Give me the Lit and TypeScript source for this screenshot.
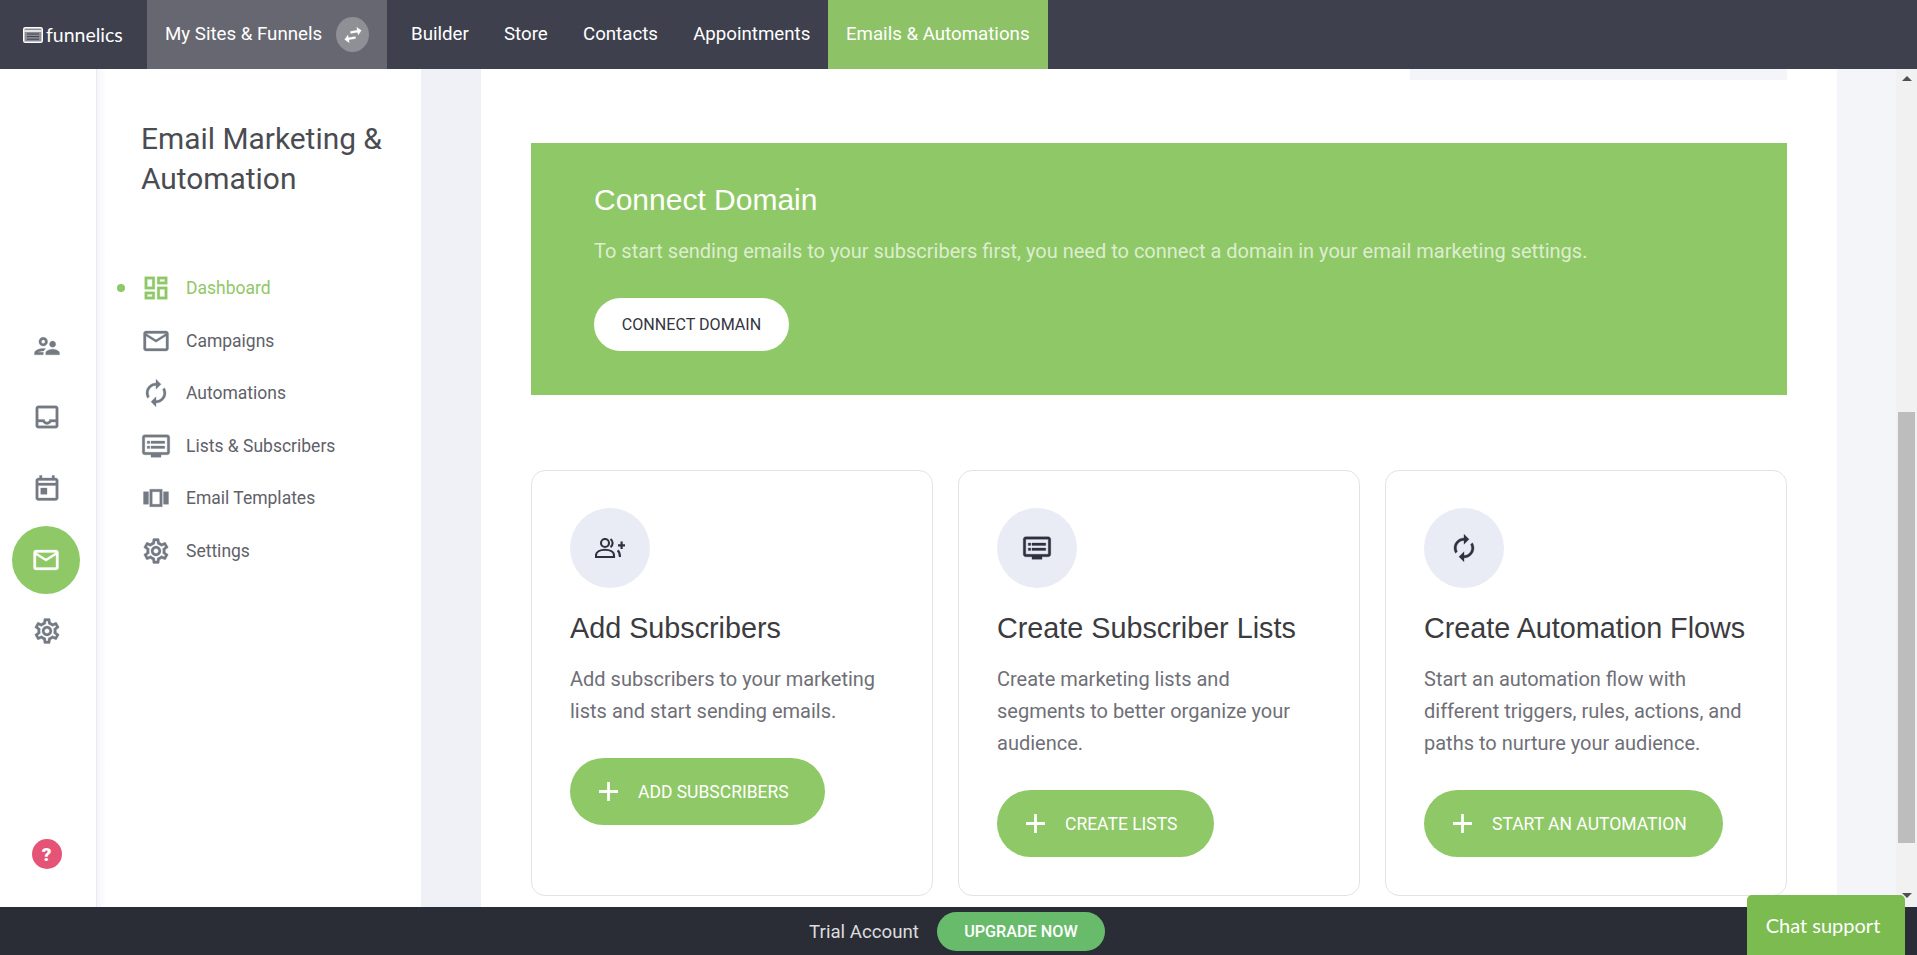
import { LitElement, html, css } from "lit";
import { customElement } from "lit/decorators.js";

const P = {
  people: "M9 12c1.93 0 3.5-1.57 3.5-3.5S10.93 5 9 5 5.5 6.57 5.5 8.5 7.07 12 9 12zm0-5c.83 0 1.5.67 1.5 1.5S9.83 10 9 10s-1.5-.67-1.5-1.5S8.17 7 9 7zm.05 10H4.77c.99-.5 2.7-1 4.23-1 .11 0 .23.01.34.01.34-.73.93-1.33 1.64-1.81-.73-.13-1.42-.2-1.98-.2-2.34 0-7 1.17-7 3.5V19h7v-1.5c0-.17.02-.34.05-.5zm7.45-2.5c-1.84 0-5.5 1.01-5.5 3V19h11v-1.5c0-1.99-3.66-3-5.5-3zm1.21-1.82c.76-.43 1.29-1.24 1.29-2.18C19 9.12 17.88 8 16.5 8S14 9.12 14 10.5c0 .94.53 1.75 1.29 2.18.36.2.77.32 1.21.32s.85-.12 1.21-.32z",
  inbox: "M19 3H5c-1.1 0-2 .9-2 2v14c0 1.1.9 2 2 2h14c1.1 0 2-.9 2-2V5c0-1.1-.9-2-2-2zm0 16H5v-3h3.56c.69 1.19 1.97 2 3.44 2s2.75-.81 3.44-2H19v3zm0-5h-4.99c0 1.1-.9 2-2 2s-2-.9-2-2H5V5h14v9z",
  today: "M19 4h-1V2h-2v2H8V2H6v2H5c-1.11 0-1.99.9-1.99 2L3 20c0 1.1.89 2 2 2h14c1.1 0 2-.9 2-2V6c0-1.1-.9-2-2-2zm0 16H5V10h14v10zm0-12H5V6h14v2zM7 12h5v5H7z",
  mail: "M20 4H4c-1.1 0-1.99.9-1.99 2L2 18c0 1.1.9 2 2 2h16c1.1 0 2-.9 2-2V6c0-1.1-.9-2-2-2zm0 14H4V8l8 5 8-5v10zm-8-7L4 6h16l-8 5z",
  gear: "M19.43 12.98c.04-.32.07-.64.07-.98 0-.34-.03-.66-.07-.98l2.11-1.65c.19-.15.24-.42.12-.64l-2-3.46c-.09-.16-.26-.25-.44-.25-.06 0-.12.01-.17.03l-2.49 1c-.52-.4-1.08-.73-1.69-.98l-.38-2.65C14.46 2.18 14.25 2 14 2h-4c-.25 0-.46.18-.49.42l-.38 2.65c-.61.25-1.17.59-1.69.98l-2.49-1c-.06-.02-.12-.03-.18-.03-.17 0-.34.09-.43.25l-2 3.46c-.13.22-.07.49.12.64l2.11 1.65c-.04.32-.07.65-.07.98 0 .33.03.66.07.98l-2.11 1.65c-.19.15-.24.42-.12.64l2 3.46c.09.16.26.25.44.25.06 0 .12-.01.17-.03l2.49-1c.52.4 1.08.73 1.69.98l.38 2.65c.03.24.24.42.49.42h4c.25 0 .46-.18.49-.42l.38-2.65c.61-.25 1.17-.59 1.69-.98l2.49 1c.06.02.12.03.18.03.17 0 .34-.09.43-.25l2-3.46c.12-.22.07-.49-.12-.64l-2.11-1.65zm-1.98-1.71c.04.31.05.52.05.73 0 .21-.02.43-.05.73l-.14 1.13.89.7 1.08.84-.7 1.21-1.27-.51-1.04-.42-.9.68c-.43.32-.84.56-1.25.73l-1.06.43-.16 1.13-.2 1.35h-1.4l-.19-1.35-.16-1.13-1.06-.43c-.43-.18-.83-.41-1.23-.71l-.91-.7-1.06.43-1.27.51-.7-1.21 1.08-.84.89-.7-.14-1.13c-.03-.31-.05-.54-.05-.74s.02-.43.05-.73l.14-1.13-.89-.7-1.08-.84.7-1.21 1.27.51 1.04.42.9-.68c.43-.32.84-.56 1.25-.73l1.06-.43.16-1.13.2-1.35h1.39l.19 1.35.16 1.13 1.06.43c.43.18.83.41 1.23.71l.91.7 1.06-.43 1.27-.51.7 1.21-1.07.85-.89.7.14 1.13zM12 8c-2.21 0-4 1.79-4 4s1.79 4 4 4 4-1.79 4-4-1.79-4-4-4zm0 6c-1.1 0-2-.9-2-2s.9-2 2-2 2 .9 2 2-.9 2-2 2z",
  dash: "M19 5v2h-4V5h4M9 5v6H5V5h4m10 8v6h-4v-6h4M9 17v2H5v-2h4M21 3h-8v6h8V3zM11 3H3v10h8V3zm10 8h-8v10h8V11zm-10 4H3v6h8v-6z",
  renew: "M12 6v3l4-4-4-4v3c-4.42 0-8 3.58-8 8 0 1.57.46 3.03 1.24 4.26L6.7 14.8c-.45-.83-.7-1.79-.7-2.8 0-3.31 2.69-6 6-6zm6.76 1.74L17.3 9.2c.44.84.7 1.79.7 2.8 0 3.31-2.69 6-6 6v-3l-4 4 4 4v-3c4.42 0 8-3.58 8-8 0-1.57-.46-3.03-1.24-4.26z",
  dvr: "M21 3H3c-1.1 0-2 .9-2 2v12c0 1.1.9 2 2 2h5v2h8v-2h5c1.1 0 1.99-.9 1.99-2L23 5c0-1.1-.9-2-2-2zm0 14H3V5h18v12zm-2-9H8v2h11V8zm0 4H8v2h11v-2zM7 8H5v2h2V8zm0 4H5v2h2v-2z",
  carousel: "M2 7h4v10H2V7zm5 12h10V5H7v14zM9 7h6v10H9V7zm9 0h4v10h-4V7z",
  swap: "M6.99 11L3 15l3.99 4v-3H14v-2H6.99v-3zM21 9l-3.99-4v3H10v2h7.01v3L21 9z",
};

const icon = (d: string, size = 30) => html`<svg class="ic" width=${size} height=${size} viewBox="0 0 24 24" fill="currentColor"><path d=${d}></path></svg>`;

const plus = html`<svg class="plus" width="19" height="19" viewBox="0 0 19 19"><path d="M9.5 0v19M0 9.5h19" stroke="#fff" stroke-width="2.8" fill="none"></path></svg>`;

const addUser = html`<svg width="30" height="20" viewBox="0 0 30 20" fill="none" stroke="#2f3140" stroke-width="2.1">
  <circle cx="10" cy="5" r="4"></circle>
  <path d="M1 19v-1.6C1 13.6 5.5 11.8 10 11.8s9 1.8 9 5.6V19z"></path>
  <path d="M15.5 1a5 5 0 0 1 0 8.2M22.6 12.4c1.7 1.3 2.4 3.6 2.4 6.6"></path>
  <path d="M26.6 3.6v7.4M23 7.3h7.2" stroke-width="2.2"></path>
</svg>`;

const logoMark = html`<svg width="20" height="16" viewBox="0 0 20 16">
  <rect x="0.75" y="0.75" width="18.5" height="14.5" rx="1.6" fill="#8b8c94" stroke="#fff" stroke-width="1.5"></rect>
  <path d="M1.5 4h17" stroke="#fff" stroke-width="1.5"></path>
  <path d="M4 7h12M4 9.6h12M4 12.2h12" stroke="#3e404d" stroke-width="1"></path>
</svg>`;

const NAV = [
  ["Dashboard", P.dash, true], ["Campaigns", P.mail, false], ["Automations", P.renew, false],
  ["Lists & Subscribers", P.dvr, false], ["Email Templates", P.carousel, false], ["Settings", P.gear, false],
] as const;

const CARDS = [
  { icon: addUser, title: "Add Subscribers", text: "Add subscribers to your marketing lists and start sending emails.", cta: "ADD SUBSCRIBERS" },
  { icon: icon(P.dvr, 30), title: "Create Subscriber Lists", text: "Create marketing lists and segments to better organize your audience.", cta: "CREATE LISTS" },
  { icon: icon(P.renew, 30), title: "Create Automation Flows", text: "Start an automation flow with different triggers, rules, actions, and paths to nurture your audience.", cta: "START AN AUTOMATION" },
];

@customElement("app-root")
export class AppRoot extends LitElement {
  static styles = css`
    :host { display: block; height: 955px; overflow: hidden; position: relative; font-family: Roboto, "Liberation Sans", sans-serif; }
    * { box-sizing: border-box; }
    .ic path { stroke: currentColor; stroke-width: .25; }
    .page { height: 955px; display: flex; flex-direction: column; }
    .top { height: 69px; flex: none; background: #3e404d; display: flex; align-items: stretch; color: #fff; font-size: 18.7px; }
    .logo { width: 147px; display: flex; align-items: center; padding-left: 23px; gap: 3px; font-family: Lato, sans-serif; font-size: 19.5px; }
    .tab { display: flex; align-items: center; padding: 0 18px 2px; white-space: nowrap; }
    .tab.sites { background: #676771; width: 240px; gap: 14px; }
    .tab.act { background: #8dc267; }
    .swap { width: 34px; height: 35px; border-radius: 50%; background: #8f8f96; display: flex; align-items: center; justify-content: center; margin-top: 2px; }
    .swap .ic { transform: rotate(-10deg); }
    .tab.plain { padding: 0 17.6px 2px; }
    .tab.first { padding-left: 24px; }
    .mid { flex: 1; display: flex; min-height: 0; }
    .rail { width: 97px; flex: none; border-right: 1.5px solid #e9eaf0; display: flex; flex-direction: column; align-items: center; color: #747a84; padding: 241.5px 3px 0 0; }
    .rail-i { height: 71px; width: 68px; flex: none; display: flex; align-items: center; justify-content: center; }
    .rail-i.on { margin-top: 1px; }
    .rail-i b { width: 68px; height: 68px; flex: none; margin-left: -2px; border-radius: 50%; background: #8fc866; color: #fff; display: flex; align-items: center; justify-content: center; }
    .help { margin-top: auto; margin-bottom: 38px; width: 30px; height: 30px; border-radius: 50%; background: #e55477; color: #fff; font-weight: 900; font-size: 19px; display: flex; align-items: center; justify-content: center; }
    .nav { width: 324px; flex: none; background: linear-gradient(90deg, #f6f6fa 0, #fff 10px); padding-top: 50px; }
    .nav h1 { margin: 0 0 63px 44px; font-size: 29.9px; font-weight: 400; line-height: 40px; color: #4a4c52; }
    .item { height: 52.55px; display: flex; align-items: center; position: relative; padding-left: 44px; font-size: 17.5px; color: #5f6169; }
    .item .ic { color: #747a84; flex: none; }
    .item span { margin-left: 15px; }
    .item.on, .item.on .ic { color: #8fc866; }
    .item.on::before { content: ""; position: absolute; left: 20px; top: 22px; width: 8px; height: 8px; border-radius: 50%; background: #8fc866; }
    .main { flex: 1; display: flex; background: linear-gradient(90deg, #f0f1f6, #f3f4f8); min-width: 0; }
    .panel { margin-left: 60px; width: 1356px; flex: none; height: 100%; background: #fff; padding: 0 50px; overflow: hidden; }
    .strip { height: 11px; width: 377px; margin-left: auto; background: #f4f5f9; }
    .banner { margin-top: 63px; height: 252px; background: #8fc866; padding: 42px 63px 0; }
    .banner h2 { margin: 0; font: 400 30px/30px "Liberation Sans", Arial, sans-serif; color: #fff; }
    .banner p { margin: 21px 0 0; font-size: 20px; line-height: 30px; color: rgba(255,255,255,.7); }
    .connect { margin-top: 32px; display: flex; width: 195px; height: 53px; border-radius: 27px; background: #fff; color: #333540; font-size: 16.1px; align-items: center; justify-content: center; }
    .cards { margin-top: 75px; display: grid; grid-template-columns: repeat(3, 402px); gap: 25px; }
    .card { height: 426px; border: 1.5px solid #e3e3e6; border-radius: 14px; padding: 37px 38px 0; }
    .circle { width: 80px; height: 80px; border-radius: 50%; background: #e9ecf4; display: flex; align-items: center; justify-content: center; color: #2f3140; }
    .card h3 { margin: 24px 0 0; font: 400 28.75px/32px "Liberation Sans", Arial, sans-serif; color: #3b3b40; white-space: nowrap; }
    .card p { margin: 19px 6px 0 0; font-size: 20px; line-height: 32px; color: #6f6f78; }
    .cta { margin-top: 31px; display: inline-flex; height: 67px; border-radius: 34px; background: #8fc866; color: #fff; align-items: center; padding: 0 36.5px 0 29px; gap: 20px; font-size: 17.5px; white-space: nowrap; }
    .gutter { flex: 1; background: #f4f5f9; }
    .bar { width: 21px; flex: none; background: #f1f1f1; display: flex; flex-direction: column; align-items: center; padding-top: 7px; }
    .up { width: 0; height: 0; border: 5px solid transparent; border-top: 0; border-bottom: 5px solid #505050; flex: none; }
    .thumb { flex: none; width: 17px; height: 431px; background: #bdbdbd; margin-top: 331px; }
    .bottom { height: 48px; flex: none; background: #2b2d36; display: flex; align-items: center; justify-content: center; color: #dcdcde; font-size: 18.7px; padding-right: 3px; }
    .bottom .inner { display: flex; align-items: center; gap: 18px; margin-top: 1px; }
    .up-btn { width: 168px; height: 39px; border-radius: 20px; background: #69bb6c; color: #fff; font-size: 16.2px; font-weight: 500; display: flex; align-items: center; justify-content: center; }
    .chat { position: absolute; left: 1747px; top: 895px; width: 158px; height: 60px; background: #7bbb50; border-radius: 5px 5px 0 0; color: #fff; font: 400 20px Lato, sans-serif; display: flex; align-items: center; justify-content: center; padding-right: 6px; }
    .down { position: absolute; left: 1902px; top: 893px; width: 0; height: 0; border: 5px solid transparent; border-bottom: 0; border-top: 5px solid #505050; }
  `;

  render() {
    return html`
      <div class="page">
        <header class="top">
          <div class="logo">${logoMark}<span>funnelics</span></div>
          <div class="tab sites">My Sites &amp; Funnels <span class="swap">${icon(P.swap, 24)}</span></div>
          <div class="tab plain first">Builder</div>
          <div class="tab plain">Store</div>
          <div class="tab plain">Contacts</div>
          <div class="tab plain">Appointments</div>
          <div class="tab act">Emails &amp; Automations</div>
        </header>
        <div class="mid">
          <aside class="rail">
            <div class="rail-i">${icon(P.people)}</div>
            <div class="rail-i">${icon(P.inbox)}</div>
            <div class="rail-i">${icon(P.today)}</div>
            <div class="rail-i on"><b>${icon(P.mail)}</b></div>
            <div class="rail-i">${icon(P.gear)}</div>
            <div class="help">?</div>
          </aside>
          <nav class="nav">
            <h1>Email Marketing &amp; Automation</h1>
            ${NAV.map(([t, d, on]) => html`<div class="item ${on ? "on" : ""}">${icon(d)}<span>${t}</span></div>`)}
          </nav>
          <div class="main">
            <section class="panel">
              <div class="strip"></div>
              <div class="banner">
                <h2>Connect Domain</h2>
                <p>To start sending emails to your subscribers first, you need to connect a domain in your email marketing settings.</p>
                <div class="connect">CONNECT DOMAIN</div>
              </div>
              <div class="cards">
                ${CARDS.map((c) => html`<article class="card">
                  <div class="circle">${c.icon}</div>
                  <h3>${c.title}</h3>
                  <p>${c.text}</p>
                  <div class="cta">${plus}<span>${c.cta}</span></div>
                </article>`)}
              </div>
            </section>
            <div class="gutter"></div>
            <div class="bar"><div class="up"></div><div class="thumb"></div></div>
          </div>
        </div>
        <footer class="bottom">
          <div class="inner"><span>Trial Account</span><div class="up-btn">UPGRADE NOW</div></div>
        </footer>
      </div>
      <div class="down"></div>
      <div class="chat">Chat support</div>
    `;
  }
}
